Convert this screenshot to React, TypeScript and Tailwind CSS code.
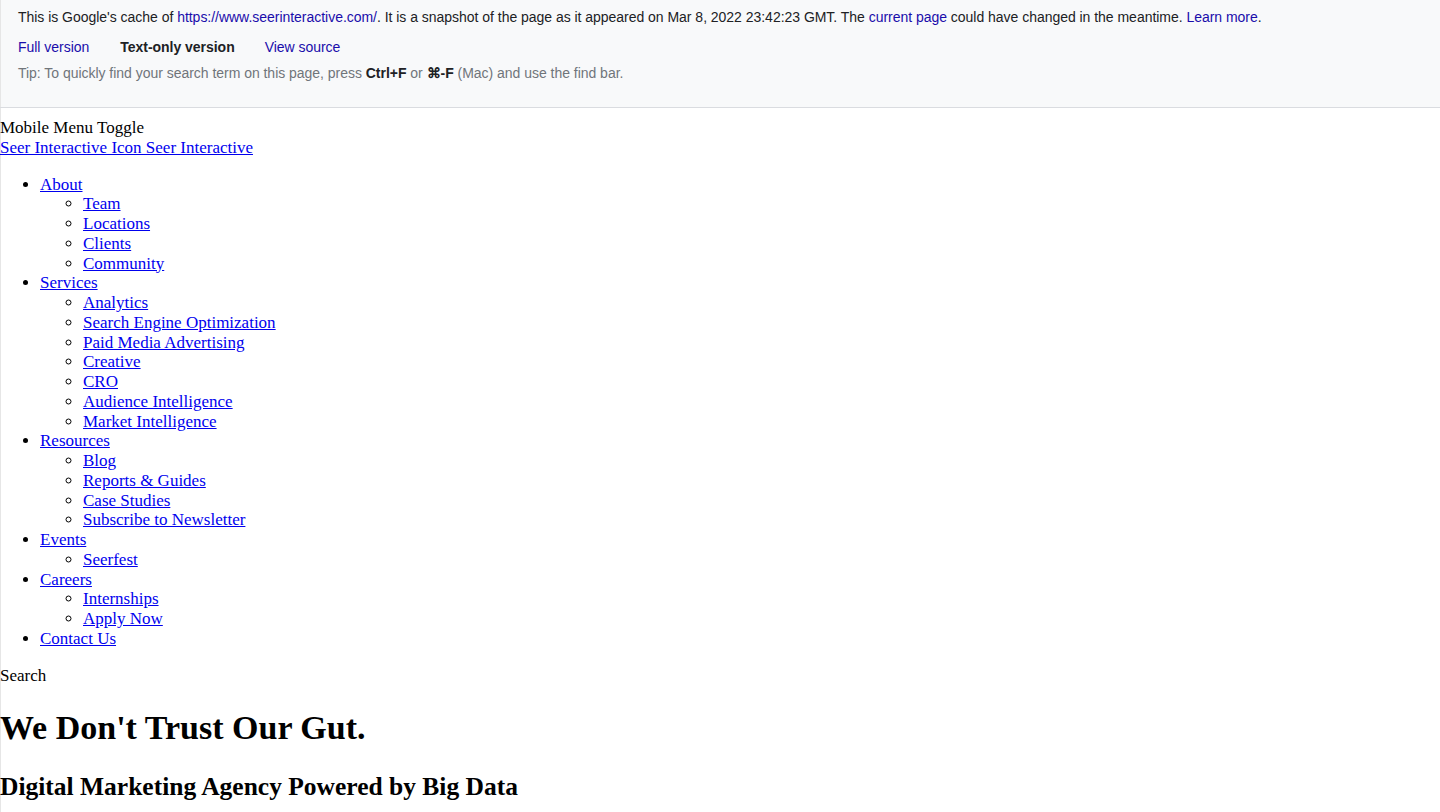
import React from 'react';

const NAV = [
  { label: 'About', children: ['Team', 'Locations', 'Clients', 'Community'] },
  {
    label: 'Services',
    children: [
      'Analytics',
      'Search Engine Optimization',
      'Paid Media Advertising',
      'Creative',
      'CRO',
      'Audience Intelligence',
      'Market Intelligence',
    ],
  },
  { label: 'Resources', children: ['Blog', 'Reports & Guides', 'Case Studies', 'Subscribe to Newsletter'] },
  { label: 'Events', children: ['Seerfest'] },
  { label: 'Careers', children: ['Internships', 'Apply Now'] },
  { label: 'Contact Us', children: [] as string[] },
];

function CacheHeader() {
  return (
    <div className="h-[108px] bg-[#f8f9fa] shadow-[inset_1px_0_0_#e6e6e6] border-b border-[#dadce0] px-[18px] pt-[7px] font-['Liberation_Sans',Arial,sans-serif] text-[14px] tracking-[-0.028px] text-[#202124]">
      <div className="leading-[20px]">
        This is Google's cache of <a className="text-[#1a0dab]">https://www.seerinteractive.com/</a>. It is a snapshot of
        the page as it appeared on Mar 8, 2022 23:42:23 GMT. The <a className="text-[#1a0dab]">current page</a> could have
        changed in the meantime. <a className="text-[#1a0dab]">Learn more</a>.
      </div>
      <div className="mt-[10px] flex leading-[20px]">
        <a className="text-[#1a0dab]">Full version</a>
        <span className="ml-[31px] font-bold">Text-only version</span>
        <a className="ml-[30px] text-[#1a0dab]">View source</a>
      </div>
      <div className="mt-[6px] leading-[20px] text-[#70757a]">
        Tip: To quickly find your search term on this page, press <b className="text-[#202124]">Ctrl+F</b> or{' '}
        <b className="text-[#202124]">⌘-F</b> (Mac) and use the find bar.
      </div>
    </div>
  );
}

export default function App() {
  return (
    <div className="min-h-screen bg-white shadow-[inset_1px_0_0_#e6e6e6]">
      <CacheHeader />
      <div className="pt-[10px] font-['Liberation_Serif','Times_New_Roman',serif] text-[17px] leading-[19.75px] text-black">
        <div>Mobile Menu Toggle</div>
        <a className="text-[#0000ee] underline">Seer Interactive Icon Seer Interactive</a>
        <ul className="my-[17px] pl-[40px] list-disc">
          {NAV.map((item) => (
            <li key={item.label}>
              <a className="text-[#0000ee] underline">{item.label}</a>
              {item.children.length > 0 && (
                <ul className="pl-[43px] list-[circle]">
                  {item.children.map((c) => (
                    <li key={c}>
                      <a className="text-[#0000ee] underline">{c}</a>
                    </li>
                  ))}
                </ul>
              )}
            </li>
          ))}
        </ul>
        <div>Search</div>
        <h1 className="mt-[23px] mb-[25px] text-[34px] leading-[39px] font-bold">We Don't Trust Our Gut.</h1>
        <h2 className="text-[25.5px] leading-[29px] font-bold">Digital Marketing Agency Powered by Big Data</h2>
      </div>
    </div>
  );
}
